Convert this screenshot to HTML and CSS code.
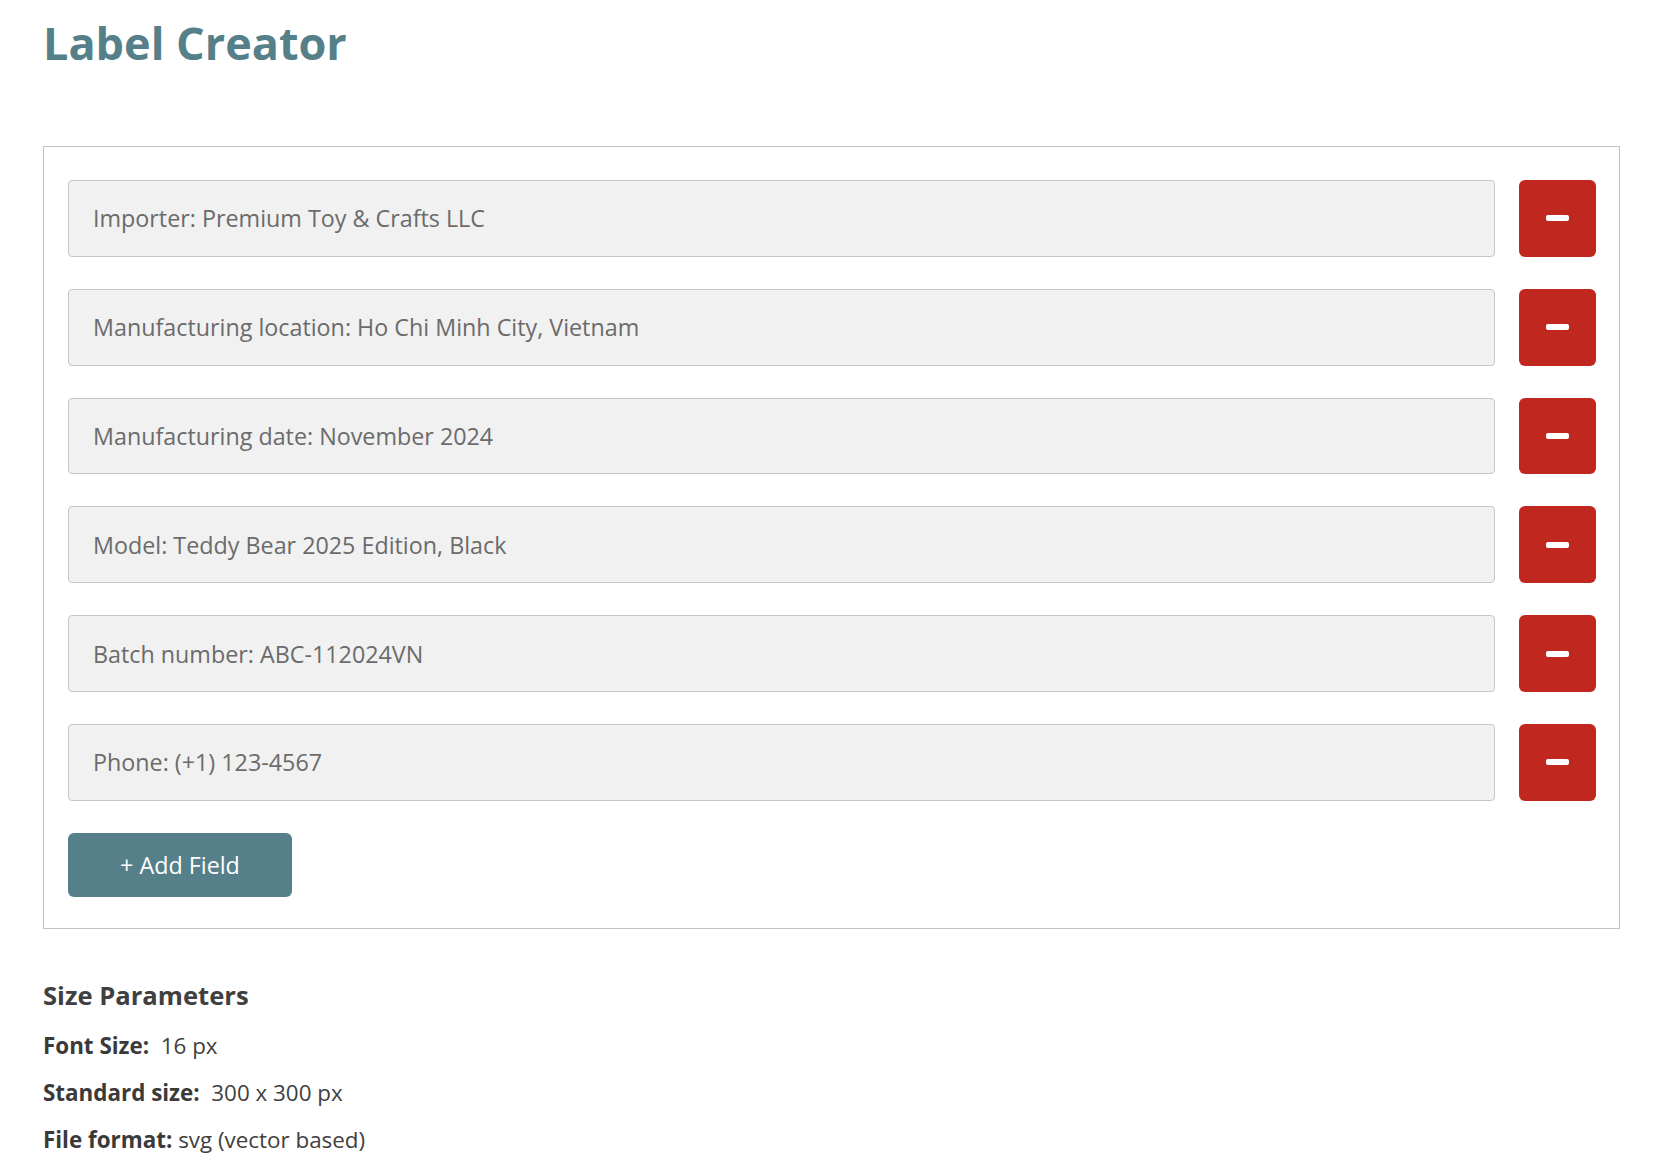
FILE: index.html
```html
<!DOCTYPE html>
<html lang="en">
<head>
<meta charset="utf-8">
<title>Label Creator</title>
<link rel="stylesheet" href="styles.css">
</head>
<body>
<div class="page">
  <h1 class="title">Label Creator</h1>
  <div class="panel">
    <div class="fields">
      <div class="row">
        <input class="field" type="text" value="Importer: Premium Toy &amp; Crafts LLC">
        <button class="remove" type="button" aria-label="Remove"><span class="minus"></span></button>
      </div>
      <div class="row">
        <input class="field" type="text" value="Manufacturing location: Ho Chi Minh City, Vietnam">
        <button class="remove" type="button" aria-label="Remove"><span class="minus"></span></button>
      </div>
      <div class="row">
        <input class="field" type="text" value="Manufacturing date: November 2024">
        <button class="remove" type="button" aria-label="Remove"><span class="minus"></span></button>
      </div>
      <div class="row">
        <input class="field" type="text" value="Model: Teddy Bear 2025 Edition, Black">
        <button class="remove" type="button" aria-label="Remove"><span class="minus"></span></button>
      </div>
      <div class="row">
        <input class="field" type="text" value="Batch number: ABC-112024VN">
        <button class="remove" type="button" aria-label="Remove"><span class="minus"></span></button>
      </div>
      <div class="row">
        <input class="field" type="text" value="Phone: (+1) 123-4567">
        <button class="remove" type="button" aria-label="Remove"><span class="minus"></span></button>
      </div>
    </div>
    <button class="add" type="button">+ Add Field</button>
  </div>
  <h2 class="params-title">Size Parameters</h2>
  <p class="param"><b>Font Size:</b>&nbsp; 16 px</p>
  <p class="param"><b>Standard size:</b>&nbsp; 300 x 300 px</p>
  <p class="param"><b>File format:</b> svg (vector based)</p>
</div>
</body>
</html>
```
FILE: styles.css
```css
* { box-sizing: border-box; }

body {
  margin: 0;
  background: #ffffff;
  font-family: "Open Sans", "Noto Sans", sans-serif;
  color: #404040;
}

.page {
  padding: 12px 39px 0 43px;
}

.title {
  margin: 0;
  font-size: 45px;
  font-weight: 700;
  line-height: normal;
  color: #55808a;
}

.panel {
  margin-top: 73px;
  border: 1px solid #c2c2c2;
  padding: 33px 23px 31px 24px;
}

.fields {
  display: flex;
  flex-direction: column;
  gap: 32px;
}

.row {
  display: flex;
  gap: 24px;
}

.field {
  flex: 1;
  min-width: 0;
  height: 76.8px;
  margin: 0;
  padding: 0 24px;
  background: #f1f1f1;
  border: 1px solid #c6c6c6;
  border-radius: 4px;
  font-family: inherit;
  font-size: 23.3px;
  color: #6b6b6b;
  outline: none;
}

.remove {
  flex: 0 0 77px;
  height: 76.8px;
  margin: 0;
  padding: 0;
  border: 0;
  border-radius: 6px;
  background: #c0281f;
  display: flex;
  align-items: center;
  justify-content: center;
  cursor: pointer;
}

.minus {
  display: block;
  width: 23px;
  height: 6px;
  border-radius: 2px;
  background: #ffffff;
}

.add {
  margin-top: 32px;
  width: 224px;
  height: 64px;
  padding: 0;
  border: 0;
  border-radius: 6px;
  background: #55808a;
  color: #ffffff;
  font-family: inherit;
  font-size: 23.3px;
  cursor: pointer;
}

.params-title {
  margin: 49px 0 17px;
  font-size: 25.6px;
  font-weight: 700;
  line-height: normal;
  color: #404040;
}

.param {
  margin: 0 0 16px;
  font-size: 22.4px;
  line-height: normal;
  color: #404040;
}

.param b {
  font-weight: 700;
  color: #3a3a3a;
}
```
